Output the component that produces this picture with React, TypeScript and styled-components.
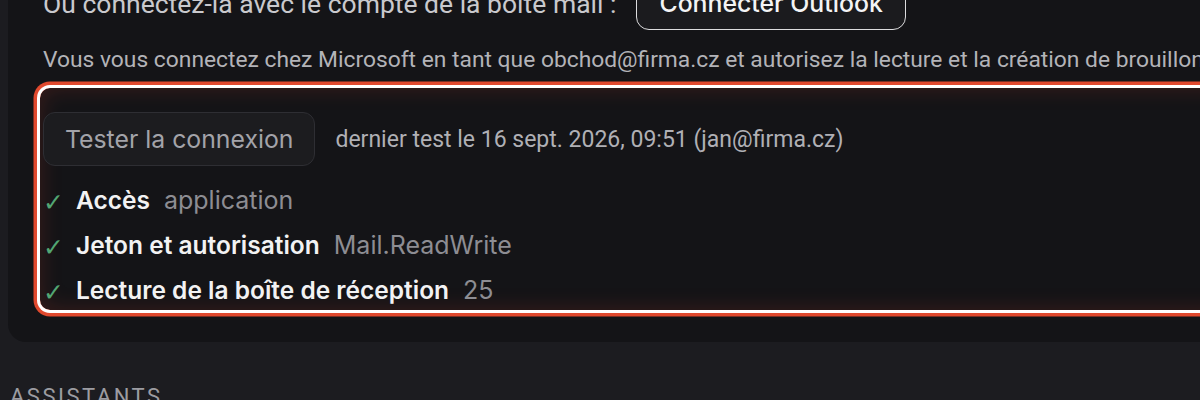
import React from 'react';
import styled, { createGlobalStyle } from 'styled-components';

const GlobalStyle = createGlobalStyle`
  html, body {
    margin: 0;
    padding: 0;
    background: #1c1c20;
    overflow: hidden;
    font-family: Roboto, "Noto Sans", sans-serif;
  }
`;

type Check = {
  label: string;
  value: string;
};

const checks: Check[] = [
  { label: 'Accès', value: 'application' },
  { label: 'Jeton et autorisation', value: 'Mail.ReadWrite' },
  { label: 'Lecture de la boîte de réception', value: '25' },
];

export default function App() {
  return (
    <>
      <GlobalStyle />
      <StyledPage>
        <StyledCard>
          <StyledConnectRow>
            <StyledLead>Ou connectez-la avec le compte de la boîte mail :</StyledLead>
            <StyledOutlineButton>Connecter Outlook</StyledOutlineButton>
          </StyledConnectRow>
          <StyledHint>
            Vous vous connectez chez Microsoft en tant que obchod@firma.cz et autorisez la lecture et la
            création de brouillons dans cette boîte.
          </StyledHint>
          <StyledHighlight>
            <StyledTestRow>
              <StyledGhostButton>Tester la connexion</StyledGhostButton>
              <StyledMeta>dernier test le 16 sept. 2026, 09:51 (jan@firma.cz)</StyledMeta>
            </StyledTestRow>
            <StyledCheckList>
              {checks.map((c) => (
                <StyledCheckItem key={c.label}>
                  <StyledTick>✓</StyledTick>
                  <StyledLabel>{c.label}</StyledLabel>
                  <StyledValue>{c.value}</StyledValue>
                </StyledCheckItem>
              ))}
            </StyledCheckList>
          </StyledHighlight>
        </StyledCard>
        <StyledSectionTitle>Assistants</StyledSectionTitle>
      </StyledPage>
    </>
  );
}

const StyledPage = styled.div`
  margin-top: -24px;
  padding-left: 8px;
  width: 1300px;
`;

const StyledCard = styled.div`
  background: #141417;
  border-radius: 0 0 0 18px;
  padding: 0 0 32px 35px;
`;

const StyledConnectRow = styled.div`
  display: flex;
  align-items: center;
  gap: 20px;
`;

const StyledLead = styled.span`
  font-size: 26.5px;
  color: #c9c9cd;
`;

const StyledOutlineButton = styled.button`
  height: 54px;
  padding: 0 22px;
  background: #1b1b1e;
  border: 1.5px solid #dcdcde;
  border-radius: 13px;
  color: #f4f4f5;
  font-family: Inter, sans-serif;
  font-size: 24.8px;
  font-weight: 500;
`;

const StyledHint = styled.p`
  margin: 15px 0 0;
  font-size: 22.8px;
  line-height: 30px;
  color: #b3b3b8;
  white-space: nowrap;
`;

const StyledHighlight = styled.div`
  margin: 13px 0 0 -3px;
  padding: 24px 0 5px 3px;
  border-radius: 10px;
  box-shadow:
    0 0 0 3px #ffffff,
    0 0 0 6.5px #e0492e,
    inset 0 0 22px rgba(200, 60, 40, 0.22);
`;

const StyledTestRow = styled.div`
  display: flex;
  align-items: center;
  gap: 20px;
`;

const StyledGhostButton = styled.button`
  height: 54px;
  padding: 0 21px;
  background: #1c1c1f;
  border: 1px solid #2e2e33;
  border-radius: 12px;
  color: #a3a3a9;
  font-family: Inter, sans-serif;
  font-size: 24.8px;
  font-weight: 400;
`;

const StyledMeta = styled.span`
  font-size: 23px;
  color: #b0b0b5;
`;

const StyledCheckList = styled.ul`
  list-style: none;
  margin: 19px 0 0;
  padding: 0;
  display: flex;
  flex-direction: column;
  gap: 15px;
`;

const StyledCheckItem = styled.li`
  display: flex;
  align-items: center;
  height: 30px;
  font-family: Inter, sans-serif;
`;

const StyledTick = styled.span`
  width: 33px;
  padding-top: 4px;
  color: #52a673;
  font-family: "DejaVu Sans", sans-serif;
  font-size: 25px;
`;

const StyledLabel = styled.span`
  color: #f2f2f3;
  font-size: 24.5px;
  font-weight: 600;
`;

const StyledValue = styled.span`
  margin-left: 14px;
  color: #8d8d93;
  font-size: 25px;
`;

const StyledSectionTitle = styled.h3`
  margin: 42px 0 0 2px;
  font-size: 22px;
  font-weight: 400;
  letter-spacing: 2.5px;
  text-transform: uppercase;
  color: #9c9ca2;
`;
